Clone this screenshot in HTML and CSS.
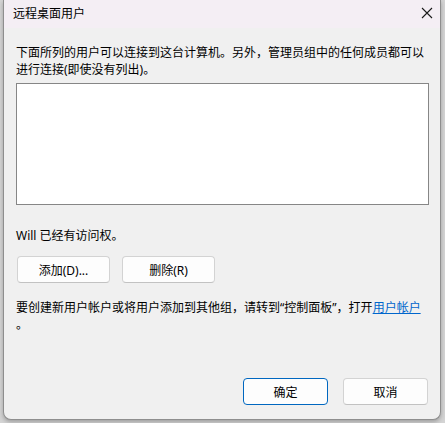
FILE: index.html
```html
<!DOCTYPE html>
<html lang="zh-CN">
<head>
    <meta charset="UTF-8">
    <title>远程桌面用户</title>
    <link rel="stylesheet" href="styles.css">
</head>
<body>
    <div class="window">
        <div class="titlebar">
            <span class="title">远程桌面用户</span>
            <svg class="close" width="12" height="12" viewBox="0 0 12 12">
                <path d="M1 1 L11 11 M11 1 L1 11" stroke="#1a1a1a" stroke-width="1.1" fill="none"/>
            </svg>
        </div>
        <div class="content">
            <p class="desc">下面所列的用户可以连接到这台计算机。另外，管理员组中的任何成员都可以进行连接(即使没有列出)。</p>
            <div class="listbox"></div>
            <p class="access">Will 已经有访问权。</p>
            <div class="row">
                <button class="btn">添加(D)...</button>
                <button class="btn">删除(R)</button>
            </div>
            <p class="help"><span class="nowrap">要创建新用户帐户或将用户添加到其他组，请转到“控制面板”，打开<a href="#">用户帐户</a></span><br>。</p>
            <div class="footer">
                <button class="btn default">确定</button>
                <button class="btn">取消</button>
            </div>
        </div>
    </div>
</body>
</html>
```

FILE: styles.css
```css
html, body {
    margin: 0;
    height: 100%;
}
body {
    background: #d4d4d4;
    font-family: "Noto Sans", "Noto Sans CJK SC", sans-serif;
    font-size: 12px;
    color: #000;
}
.window {
    margin-left: 3px;
    width: 436px;
    height: 419px;
    background: #f0f0f0;
    border: 1px solid #8e8e8e;
    border-top: none;
    border-radius: 0 0 8px 8px;
    display: flex;
    flex-direction: column;
    box-shadow: 0 2px 4px rgba(0, 0, 0, 0.25);
}
.titlebar {
    height: 28px;
    background: #f4eef4;
    display: flex;
    align-items: center;
    justify-content: space-between;
    padding: 0 9px 0 9px;
    flex-shrink: 0;
}
.title {
    line-height: 17px;
    margin-top: -2px;
}
.close {
    margin-right: -2px;
    margin-top: -3px;
}
.content {
    flex: 1;
    display: flex;
    flex-direction: column;
    padding: 16px 11px 14px 12px;
}
p {
    margin: 0;
    line-height: 17px;
}
.listbox {
    margin-top: 5px;
    height: 120px;
    background: #fff;
    border: 1px solid #868686;
}
.access {
    margin-top: 22px;
}
.row {
    display: flex;
    gap: 12px;
    margin-top: 12px;
    padding-left: 1px;
}
.btn {
    width: 93px;
    height: 27px;
    padding: 0;
    background: #fdfdfd;
    border: 1px solid #d3d3d3;
    border-bottom-color: #c2c2c2;
    border-radius: 4px;
    font-family: inherit;
    font-size: 12px;
    color: #000;
}
.help {
    margin-top: 16px;
}
.nowrap {
    white-space: nowrap;
}
.help a {
    color: #0066cc;
    text-decoration: underline;
}
.footer {
    margin-top: auto;
    display: flex;
    justify-content: flex-end;
    gap: 15px;
    padding-right: 1px;
}
.footer .btn {
    width: 85px;
}
.btn.default {
    border-color: #0067c0;
}
```
